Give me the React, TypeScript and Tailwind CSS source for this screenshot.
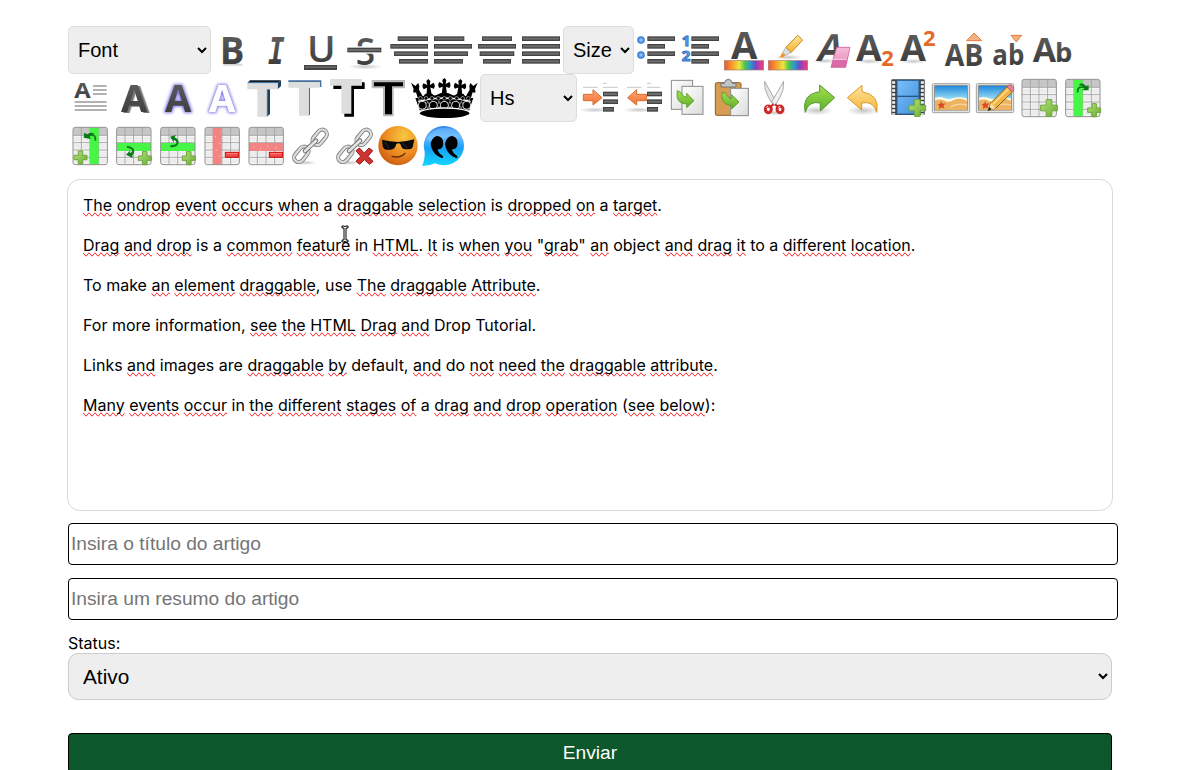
import React from "react";

type GlyphProps = { x: number; row: 1 | 2 | 3; label: string; children: React.ReactNode };

const ROW_TOP = { 1: 18, 2: 162, 3: 306 };

/* Toolbar buttons are drawn three units to the pixel. */
function Tool({ x, row, label, children }: GlyphProps) {
  return (
    <button aria-label={label} className="block h-12 w-11 shrink-0">
      <svg viewBox={`${x} ${ROW_TOP[row]} 132 144`} className="block h-12 w-11 overflow-visible">
        {children}
      </svg>
    </button>
  );
}

type LetterProps = {
  x: number;
  y: number;
  w: number;
  size: number;
  children: string;
  fill?: string;
  className?: string;
  filter?: string;
};

function Letter({ x, y, w, size, children, fill = "url(#ink)", className = "font-bold", filter }: LetterProps) {
  return (
    <text
      x={x}
      y={y}
      fontSize={size}
      textLength={w}
      lengthAdjust="spacingAndGlyphs"
      fill={fill}
      filter={filter}
      className={`font-['Open_Sans',sans-serif] ${className}`}
    >
      {children}
    </text>
  );
}

function Bars({ rows }: { rows: [number, number, number][] }) {
  return (
    <>
      {rows.map(([x1, x2, y], i) => (
        <g key={i}>
          <rect x={x1} y={y} width={x2 - x1} height={14} fill="#444444" />
          <rect x={x1 + 3} y={y + 4} width={x2 - x1 - 6} height={6} fill="#6d6d6d" />
        </g>
      ))}
    </>
  );
}

function Shade({ cx, cy, rx = 45, ry = 8 }: { cx: number; cy: number; rx?: number; ry?: number }) {
  return <ellipse cx={cx} cy={cy} rx={rx} ry={ry} fill="url(#shade)" />;
}

function Plus({ x, y, s = 50 }: { x: number; y: number; s?: number }) {
  const a = s * 0.33;
  const b = s * 0.34;
  return (
    <path
      d={`M${x + a} ${y}h${b}v${a}h${a}v${b}h${-a}v${a}h${-b}v${-a}h${-a}v${-b}h${a}z`}
      fill="url(#plus)"
      stroke="#6fa53f"
      strokeWidth={3}
      strokeLinejoin="round"
    />
  );
}

function Minus({ x, y }: { x: number; y: number }) {
  return (
    <g>
      <rect x={x} y={y} width={40} height={15} fill="#f04747" stroke="#d00d0d" strokeWidth={3} />
      <path d={`M${x + 3} ${y + 4}h34`} stroke="#fb8585" strokeWidth={3} />
    </g>
  );
}

type TableProps = { x: number; y: number; col?: number; band?: boolean; color?: string };

function Table({ x, y, col, band, color = "#46f546" }: TableProps) {
  return (
    <g>
      <rect x={x + 1} y={y + 1} width={103} height={112} rx={7} fill="#fbfbfb" />
      <path d={`M${x + 2} ${y + 24}v-16q0-6 6-6h89q6 0 6 6v16z`} fill="#c6c6c6" />
      {[29, 51, 73, 95].map((t) =>
        [4, 29, 55, 81].map((l) => (
          <rect key={`${t}-${l}`} x={x + l} y={y + t} width={20} height={14} fill="#ececec" />
        )),
      )}
      <path
        d={`M${x + 26} ${y + 2}v110M${x + 52} ${y + 2}v110M${x + 78} ${y + 2}v110M${x + 2} ${y + 25}h101M${x + 2} ${y + 47}h101M${x + 2} ${y + 69}h101M${x + 2} ${y + 91}h101`}
        stroke="#a6a6a6"
        strokeWidth={3}
      />
      {col !== undefined && <rect x={col} y={y + 2} width={27} height={111} fill={color} />}
      {band && <rect x={x + 1} y={y + 48} width={103} height={24} fill={color} />}
      <rect x={x + 1} y={y + 1} width={103} height={112} rx={7} fill="none" stroke="#8f8f8f" strokeWidth={3} />
    </g>
  );
}

function Rainbow({ x }: { x: number }) {
  return <rect x={x} y={122} width={118} height={28} fill="url(#rainbow)" stroke="#a77a70" strokeWidth={2} />;
}

function GreenArrow({ x, y }: { x: number; y: number }) {
  return (
    <path
      transform={`translate(${x} ${y})`}
      d="M1 0Q11 2 15 10Q19 19 29 20V8L51 30L29 51V40Q5 39 1 21Q-1 9 1 0Z"
      fill="url(#leaf)"
      stroke="#4f9a21"
      strokeWidth={2.5}
      strokeLinejoin="round"
    />
  );
}

function Beach({ x }: { x: number }) {
  return (
    <g>
      <rect x={x + 1} y={191} width={112} height={87} rx={3} fill="#e2e2df" stroke="#a2a29f" strokeWidth={3} />
      <rect x={x + 8} y={197} width={98} height={74} fill="url(#sky)" stroke="#777" strokeWidth={2} />
      <path d={`M${x + 9} 234q13-6 28 0t27 0q20-5 41 2v35H${x + 9}z`} fill="#fff9df" />
      <path d={`M${x + 9} 241q15-6 29 1t28-3q20-6 39 3v28H${x + 9}z`} fill="#ecb363" />
      <path d={`M${x + 55} 262q20-15 50-7`} stroke="#f8d79b" strokeWidth={4} fill="none" />
      <path d={`M${x + 27} 242l4 9 10-1-7 8 4 8-9-4-8 6 1-10-5-6 8-1z`} fill="#d94b22" />
    </g>
  );
}

function Chain({ x }: { x: number }) {
  return (
    <g transform={`translate(${x} 0)`}>
      <ellipse cx="38" cy="428" rx="34" ry="7" fill="url(#shade)" />
      <g fill="none" strokeLinecap="round">
        <g stroke="#7c7c7c" strokeWidth="12">
          <rect x="-14" y="-26" width="28" height="52" rx="14" transform="translate(26 403) rotate(40)" />
          <rect x="-14" y="-26" width="28" height="52" rx="14" transform="translate(81 352) rotate(40)" />
        </g>
        <g stroke="#dddddd" strokeWidth="7">
          <rect x="-14" y="-26" width="28" height="52" rx="14" transform="translate(26 403) rotate(40)" />
          <rect x="-14" y="-26" width="28" height="52" rx="14" transform="translate(81 352) rotate(40)" />
        </g>
        <path d="M37 393L70 362" stroke="#6f6f6f" strokeWidth="14" />
        <path d="M37 393L70 362" stroke="#e4e4e4" strokeWidth="8" />
      </g>
    </g>
  );
}

function Cross({ x, y, r = 0, s = 1 }: { x: number; y: number; r?: number; s?: number }) {
  return (
    <path
      transform={`translate(${x} ${y}) rotate(${r}) scale(${s})`}
      d="M-6-18L0-24L6-18L4-6L15-12Q22-3 15 6L5 2L8 25H-8L-5 2L-15 6Q-22-3-15-12L-4-6Z"
    />
  );
}

function Defs() {
  return (
    <svg className="absolute size-0" aria-hidden="true">
      <defs>
        <linearGradient id="ink" x1="0" y1="0" x2="0" y2="1">
          <stop offset="0" stopColor="#686868" />
          <stop offset="1" stopColor="#333333" />
        </linearGradient>
        <radialGradient id="shade">
          <stop offset="0" stopColor="#000" stopOpacity="0.22" />
          <stop offset="1" stopColor="#000" stopOpacity="0" />
        </radialGradient>
        <linearGradient id="plus" x1="0" y1="0" x2="1" y2="1">
          <stop offset="0" stopColor="#b4e37a" />
          <stop offset="1" stopColor="#66ac30" />
        </linearGradient>
        <linearGradient id="leaf" x1="0" y1="0" x2="0" y2="1">
          <stop offset="0" stopColor="#a4e052" />
          <stop offset="1" stopColor="#5cae26" />
        </linearGradient>
        <linearGradient id="gold" x1="0" y1="0" x2="0" y2="1">
          <stop offset="0" stopColor="#ffe49a" />
          <stop offset="1" stopColor="#f5b437" />
        </linearGradient>
        <linearGradient id="orange" x1="0" y1="0" x2="0" y2="1">
          <stop offset="0" stopColor="#ffa879" />
          <stop offset="1" stopColor="#f2702d" />
        </linearGradient>
        <linearGradient id="rainbow">
          <stop offset="0" stopColor="#e95632" />
          <stop offset="0.22" stopColor="#f7a52e" />
          <stop offset="0.38" stopColor="#e8e83b" />
          <stop offset="0.52" stopColor="#4fc64c" />
          <stop offset="0.68" stopColor="#2792d9" />
          <stop offset="0.8" stopColor="#7646bd" />
          <stop offset="0.91" stopColor="#d23baa" />
          <stop offset="1" stopColor="#e83f59" />
        </linearGradient>
        <linearGradient id="sky" x1="0" y1="0" x2="0" y2="1">
          <stop offset="0" stopColor="#2087da" />
          <stop offset="0.5" stopColor="#8ed7f4" />
        </linearGradient>
        <linearGradient id="film" x1="0" y1="0" x2="1" y2="1">
          <stop offset="0" stopColor="#7ac0f9" />
          <stop offset="1" stopColor="#438fda" />
        </linearGradient>
        <linearGradient id="paper" x1="0" y1="0" x2="1" y2="1">
          <stop offset="0" stopColor="#ffffff" />
          <stop offset="1" stopColor="#dadcdb" />
        </linearGradient>
        <linearGradient id="pink" x1="0" y1="0" x2="0" y2="1">
          <stop offset="0" stopColor="#f5bbd9" />
          <stop offset="0.6" stopColor="#ed9bc6" />
          <stop offset="0.63" stopColor="#dc6aa8" />
        </linearGradient>
        <radialGradient id="face" cx="0.65" cy="0.25" r="0.8">
          <stop offset="0" stopColor="#f8c840" />
          <stop offset="0.6" stopColor="#ec8a21" />
          <stop offset="1" stopColor="#c95c12" />
        </radialGradient>
        <linearGradient id="bubble" x1="0" y1="0" x2="0" y2="1">
          <stop offset="0" stopColor="#2f87ed" />
          <stop offset="0.3" stopColor="#63b8ff" />
          <stop offset="0.55" stopColor="#1a9ff5" />
          <stop offset="1" stopColor="#12d7ff" />
        </linearGradient>
        <filter id="halo" x="-40%" y="-20%" width="180%" height="140%">
          <feMorphology in="SourceAlpha" operator="dilate" radius="4" result="wide" />
          <feGaussianBlur in="wide" stdDeviation="4" result="soft" />
          <feFlood floodColor="#6a68e0" floodOpacity="0.85" />
          <feComposite in2="soft" operator="in" result="glow" />
          <feMerge>
            <feMergeNode in="glow" />
            <feMergeNode in="SourceGraphic" />
          </feMerge>
        </filter>
        <filter id="cast" x="-20%" y="-10%" width="150%" height="130%">
          <feDropShadow dx="7" dy="3" stdDeviation="0.6" floodColor="#777777" />
        </filter>
      </defs>
    </svg>
  );
}

const SELECT =
  "h-12 shrink-0 rounded-[5px] border border-[#dddddd] bg-[#eeeeee] px-[5px] font-['Liberation_Sans',Arial,sans-serif] text-[20px] text-black";

function RowOne() {
  return (
    <div className="flex h-12">
      <select aria-label="Font" className={`${SELECT} w-[143px]`}>
        <option>Font</option>
      </select>
      <Tool x={453} row={1} label="Bold">
        <path d="M490 131h57v6h-57z" fill="#d4d4d4" />
        <Letter x={479} y={131} w={74} size={113}>B</Letter>
      </Tool>
      <Tool x={585} row={1} label="Italic">
        <text x="624" y="131" fontSize="112" textLength="50" lengthAdjust="spacingAndGlyphs" fill="url(#ink)" className="font-['DejaVu_Sans_Mono',monospace] font-bold italic">I</text>
      </Tool>
      <Tool x={-33} row={1} label="Underline">
        <Letter x={-9} y={125} w={86} size={108} className="font-semibold">U</Letter>
        <rect x="-18" y="135" width="99" height="15" fill="#444" />
        <rect x="-15" y="139" width="93" height="5" fill="#686868" />
      </Tool>
      <Tool x={99} row={1} label="Strikethrough">
        <Shade cx={166} cy={140} rx={52} />
        <Letter x={137} y={134} w={58} size={115} className="font-semibold">S</Letter>
        <rect x="108" y="79" width="108" height="22" fill="#fff" />
        <Bars rows={[[112, 214, 83]]} />
      </Tool>
      <Tool x={231} row={1} label="Align right">
        <Bars rows={[[263, 354, 49], [241, 354, 72], [252, 354, 94], [267, 354, 117]]} />
      </Tool>
      <Tool x={363} row={1} label="Align left">
        <Bars rows={[[372, 463, 49], [372, 486, 72], [372, 474, 94], [372, 459, 117]]} />
      </Tool>
      <Tool x={495} row={1} label="Align center">
        <Bars rows={[[516, 606, 49], [504, 618, 72], [509, 613, 94], [519, 603, 117]]} />
      </Tool>
      <Tool x={627} row={1} label="Justify">
        <Bars rows={[[636, 750, 49], [636, 750, 72], [636, 750, 94], [636, 750, 117]]} />
      </Tool>
      <select aria-label="Size" className={`${SELECT} w-[71px]`}>
        <option>Size</option>
      </select>
      <Tool x={222} row={1} label="Bulleted list">
        {[60, 105].map((cy) => (
          <g key={cy}>
            <circle cx="243" cy={cy} r="9.5" fill="#5ea2ef" stroke="#3d7fd0" strokeWidth="4" />
            <circle cx="243" cy={cy} r="4" fill="#8fc0fb" />
          </g>
        ))}
        <Bars rows={[[262, 345, 49], [262, 315, 72], [262, 345, 94], [262, 315, 117]]} />
      </Tool>
      <Tool x={354} row={1} label="Numbered list">
        <text fontSize="45" fill="#6caaf0" stroke="#336fbd" strokeWidth="3" className="font-['Open_Sans',sans-serif] font-bold">
          <tspan x="365" y="77">1</tspan>
          <tspan x="365" y="122">2</tspan>
        </text>
        <Bars rows={[[394, 477, 49], [394, 447, 72], [394, 477, 94], [394, 447, 117]]} />
      </Tool>
      <Tool x={486} row={1} label="Text colour">
        <Letter x={513} y={116} w={79} size={110}>A</Letter>
        <Rainbow x={493} />
      </Tool>
      <Tool x={618} row={1} label="Highlight colour">
        <Shade cx={685} cy={112} rx={42} />
        <path d="M658 113L667 98L677 105L671 112Z" fill="#f09a2c" />
        <path d="M667 98L678 82L694 97L677 106Z" fill="#ddd" stroke="#999" strokeWidth="2" />
        <path d="M678 82L713 46L728 60L694 97Z" fill="url(#gold)" stroke="#c88b1c" strokeWidth="3" strokeLinejoin="round" />
        <Rainbow x={625} />
      </Tool>
      <Tool x={0} row={1} label="Remove format">
        <Shade cx={45} cy={123} rx={38} />
        <g transform="translate(17 122) skewX(-14)">
          <Letter x={0} y={0} w={72} size={112}>A</Letter>
        </g>
        <path d="M80 82H120L107 142H63L70 116Z" fill="url(#pink)" stroke="#cf609e" strokeWidth="2.5" strokeLinejoin="round" />
        <path d="M70 118H110" stroke="#fbd2e7" strokeWidth="3" />
      </Tool>
      <Tool x={132} row={1} label="Subscript">
        <Shade cx={178} cy={124} rx={40} />
        <Letter x={138} y={122} w={77} size={108}>A</Letter>
        <Letter x={214} y={137} w={38} size={64} fill="#e66a27">2</Letter>
      </Tool>
      <Tool x={264} row={1} label="Superscript">
        <Shade cx={310} cy={124} rx={40} />
        <Letter x={271} y={122} w={77} size={108}>A</Letter>
        <Letter x={339} y={78} w={38} size={64} fill="#e66a27">2</Letter>
      </Tool>
      <Tool x={396} row={1} label="Upper case">
        <Letter x={404} y={139} w={116} size={89}>AB</Letter>
        <path d="M470 62L492 39L515 62Z" fill="#f6b181" stroke="#e8793f" strokeWidth="3" />
      </Tool>
      <Tool x={528} row={1} label="Lower case">
        <Letter x={547} y={134} w={96} size={86}>ab</Letter>
        <path d="M603 46H635L619 66Z" fill="#f6b181" stroke="#e8793f" strokeWidth="3" />
      </Tool>
      <Tool x={660} row={1} label="Capitalize">
        <Letter x={668} y={126} w={70} size={100}>A</Letter>
        <Letter x={735} y={125} w={52} size={81}>b</Letter>
      </Tool>
    </div>
  );
}

function RowTwo() {
  return (
    <div className="flex h-12">
      <Tool x={24} row={2} label="Line height">
        <Letter x={43} y={234} w={49} size={65}>A</Letter>
        <path d="M99 198h41M99 210h41M99 222h41M44 246h96M44 258h96M44 270h96" stroke="#66676b" strokeWidth="3.5" />
      </Tool>
      <Tool x={156} row={2} label="Text shadow">
        <Letter x={183} y={276} w={79} size={111} filter="url(#cast)">A</Letter>
      </Tool>
      <Tool x={288} row={2} label="Text glow">
        <Letter x={315} y={276} w={79} size={111} filter="url(#halo)">A</Letter>
      </Tool>
      <Tool x={420} row={2} label="Text outline">
        <Letter x={447} y={276} w={79} size={111} fill="#fff" filter="url(#halo)">A</Letter>
      </Tool>
      <button aria-label="Deep text" className="w-[42px] shrink-0">
        <svg viewBox="552 162 126 144" className="block h-12 w-[42px]">
          <path d="M562 190L570 181H663L653 190Z" fill="#111c27" />
          <path d="M653 190L663 181V198L653 208ZM620 208H630V282L620 290Z" fill="#18405f" />
          <path d="M562 190L566 186H658L653 190ZM620 208H624V287L620 290Z" fill="#3b74a7" />
          <path d="M562 190H653V208H620V290H592V208H562Z" fill="#dddddd" />
        </svg>
      </button>
      <button aria-label="Raised text" className="w-[42px] shrink-0">
        <svg viewBox="678 162 126 144" className="block h-12 w-[42px]">
          <path d="M685 186V181H784V201H779V186ZM746 203H750V284L746 287Z" fill="#426f9e" />
          <path d="M685 186H779V203H746V287H717V203H685Z" fill="#dddddd" />
        </svg>
      </button>
      <button aria-label="Hard shadow text" className="w-[42px] shrink-0">
        <svg viewBox="54 162 126 144" className="block h-12 w-[42px]">
          <path d="M70 187H164V207H132V290H103V207H70Z" fill="#000" />
          <path d="M60 177H156V197H124V281H94V197H60Z" fill="#dddddd" />
        </svg>
      </button>
      <button aria-label="Outlined text" className="w-10 shrink-0">
        <svg viewBox="180 162 120 144" className="block h-12 w-10">
          <path d="M185 180H285V205H251V289H219V205H185Z" fill="#b9b9b9" />
          <path d="M192 187H279V199H246V283H225V199H192Z" fill="#000" />
        </svg>
      </button>
      <button aria-label="Special style" className="w-[70px] shrink-0">
        <svg viewBox="300 162 210 144" className="block h-12 w-[70px]">
          <Cross x={403} y={198} />
          <Cross x={356} y={201} r={-3} />
          <Cross x={450} y={201} r={3} />
          <path d="M303 188L316 198L325 189Q331 200 327 209L340 232L325 239L318 217Q306 222 311 207Z" />
          <path d="M503 188L490 198L481 189Q475 200 479 209L466 232L481 239L488 217Q500 222 495 207Z" />
          <path d="M316 234Q337 236 346 221H366Q372 229 379 225L393 219H414L427 225Q434 229 441 221H460Q469 236 490 234L486 245L478 271H329L320 245Z" />
          <path d="M324 244Q404 224 482 244" fill="none" stroke="#fff" strokeWidth="4" />
          {[337, 370, 403, 437, 470].map((cx) => (
            <g key={cx}>
              <circle cx={cx} cy={256} r="13" fill="#fff" />
              <circle cx={cx} cy={256} r="10.5" />
            </g>
          ))}
          {[331, 348, 366, 385, 403, 421, 440, 458, 475].map((cx) => (
            <circle key={cx} cx={cx} cy={235} r="5.5" stroke="#fff" strokeWidth="1.5" />
          ))}
          {[353, 387, 420, 454].map((cx) => (
            <path key={cx} d={`M${cx} 244l5 11-5 11-5-11z`} stroke="#fff" strokeWidth="1.5" />
          ))}
          <ellipse cx="404" cy="279" rx="76" ry="17" fill="#fff" />
          <ellipse cx="404" cy="280" rx="74" ry="14" />
        </svg>
      </button>
      <select aria-label="Heading" className={`${SELECT} w-[97px]`}>
        <option>Hs</option>
      </select>
      <Tool x={51} row={2} label="Indent">
        <Shade cx={105} cy={270} rx={48} />
        <path d="M69 202h44M129 202h44M129 190h11" stroke="#aaa" strokeWidth="2" />
        <path d="M70 223H99V209L126 233L99 255V242H70Z" fill="url(#orange)" stroke="#d96a2d" strokeWidth="3" strokeLinejoin="round" />
        <Bars rows={[[129, 174, 215], [129, 174, 238], [129, 162, 261]]} />
      </Tool>
      <Tool x={183} row={2} label="Outdent">
        <Shade cx={237} cy={270} rx={48} />
        <path d="M201 202h44M261 202h40M261 190h11" stroke="#aaa" strokeWidth="2" />
        <path d="M259 223H230V209L203 233L230 255V242H259Z" fill="url(#orange)" stroke="#d96a2d" strokeWidth="3" strokeLinejoin="round" />
        <Bars rows={[[261, 306, 215], [261, 306, 238], [261, 294, 261]]} />
      </Tool>
      <Tool x={315} row={2} label="Copy">
        <rect x="334" y="181" width="64" height="87" fill="url(#paper)" stroke="#8a8d8b" strokeWidth="3" />
        <rect x="366" y="199" width="63" height="84" fill="url(#paper)" stroke="#8a8d8b" strokeWidth="3" />
        <GreenArrow x={351} y={212} />
      </Tool>
      <Tool x={447} row={2} label="Paste">
        <rect x="466" y="188" width="77" height="98" rx="4" fill="#d59c54" stroke="#8f5e20" strokeWidth="3" />
        <rect x="512" y="205" width="53" height="82" fill="url(#paper)" stroke="#8a8d8b" strokeWidth="3" />
        <path d="M483 201V190H493Q495 178 505 178T517 190H528V201Z" fill="#c2c5c8" stroke="#70767a" strokeWidth="3" />
        <GreenArrow x={486} y={216} />
      </Tool>
      <Tool x={579} row={2} label="Cut">
        <Shade cx={643} cy={278} rx={40} />
        <path d="M614 184Q612 210 625 231L640 256L649 246Z" fill="#e5e7e7" stroke="#9b9e9e" strokeWidth="2.5" strokeLinejoin="round" />
        <path d="M671 184Q673 210 660 231L646 256L635 246Z" fill="#f0f1f1" stroke="#9b9e9e" strokeWidth="2.5" strokeLinejoin="round" />
        <g fill="none" stroke="#cf2828" strokeWidth="9">
          <ellipse cx="625" cy="268" rx="9" ry="10" />
          <ellipse cx="660" cy="268" rx="9" ry="10" />
          <path d="M632 259L641 253M653 259L645 253" strokeWidth="6" />
        </g>
        <path d="M619 262l5-3M655 262l5-3" stroke="#fff0ee" strokeWidth="3" />
      </Tool>
      <Tool x={711} row={2} label="Redo">
        <Shade cx={770} cy={272} rx={50} ry={14} />
        <path d="M736 277Q724 224 779 215V195L824 233L781 273V249Q745 241 736 277Z" fill="url(#leaf)" stroke="#4e982a" strokeWidth="3" strokeLinejoin="round" />
      </Tool>
      <Tool x={93} row={2} label="Undo">
        <Shade cx={160} cy={272} rx={50} ry={14} />
        <path d="M200 277Q211 224 156 215V196L112 233L155 270V249Q190 241 200 277Z" fill="url(#gold)" stroke="#d99a28" strokeWidth="3" strokeLinejoin="round" />
      </Tool>
      <Tool x={225} row={2} label="Insert video">
        <rect x="244" y="178" width="100" height="107" rx="3" fill="#3d454b" />
        <path d="M251 184V284M337 184V284" stroke="#f4f4f4" strokeWidth="9" strokeDasharray="7 5" />
        <rect x="261" y="181" width="66" height="101" fill="url(#film)" stroke="#2e5f91" strokeWidth="3" />
        <path d="M261 229h66" stroke="#285681" strokeWidth="4" />
        <Plus x={297} y={239} />
      </Tool>
      <Tool x={357} row={2} label="Insert image">
        <Beach x={366} />
      </Tool>
      <Tool x={489} row={2} label="Edit image">
        <Beach x={498} />
        <path d="M534 272L543 248L591 200L607 216L557 265Z" fill="#f2b443" stroke="#895e1d" strokeWidth="3" strokeLinejoin="round" />
        <path d="M549 253L596 206" stroke="#ffe29b" strokeWidth="4" />
        <path d="M591 200L596 195Q603 192 609 200Q612 206 611 211L607 216Z" fill="#ec8191" stroke="#a14d5a" strokeWidth="2" />
        <path d="M534 272L543 248L557 265Z" fill="#f8dba6" />
        <path d="M533 273L538 261L545 268Z" fill="#1a1a1a" />
      </Tool>
      <Tool x={621} row={2} label="Insert table">
        <Table x={635} y={177} />
        <Plus x={692} y={239} />
      </Tool>
      <Tool x={753} row={2} label="Add column right">
        <Table x={766} y={177} col={791} />
        <path d="M803 217Q801 195 826 203" fill="none" stroke="#087a17" strokeWidth="5" />
        <path d="M812 190Q822 191 828 198L836 196L836 211L816 211L823 204Q819 196 806 196Z" fill="#087a17" />
        <Plus x={833} y={251} s={39} />
      </Tool>
    </div>
  );
}

function RowThree() {
  return (
    <div className="flex h-12">
      <Tool x={24} row={3} label="Add column left">
        <Table x={38} y={321} col={89} />
        <path d="M106 362Q108 338 84 347" fill="none" stroke="#087a17" strokeWidth="5" />
        <path d="M71 353L73 338L81 343Q92 334 103 341L89 347L92 357Z" fill="#087a17" />
        <Plus x={42} y={393} s={39} />
      </Tool>
      <Tool x={156} row={3} label="Add row below">
        <Table x={169} y={321} band />
        <path d="M201 380Q225 384 218 399Q215 405 208 405" fill="none" stroke="#087a17" strokeWidth="6" />
        <path d="M198 404L211 391L210 400Q220 394 218 384Q226 396 217 405L218 414Z" fill="#087a17" />
        <Plus x={235} y={395} s={39} />
      </Tool>
      <Tool x={288} row={3} label="Add row above">
        <Table x={301} y={321} band />
        <path d="M331 379Q353 379 353 367Q353 359 342 356" fill="none" stroke="#087a17" strokeWidth="6" />
        <path d="M330 350L348 345L344 352Q357 358 353 373Q349 360 341 360L342 368Z" fill="#087a17" />
        <Plus x={367} y={395} s={39} />
      </Tool>
      <Tool x={420} row={3} label="Delete column">
        <Table x={434} y={321} col={458} color="#f28484" />
        <path d="M465 350h3M478 370h3M467 390h3M477 408h3" stroke="#ffd5d5" strokeWidth="3" />
        <Minus x={496} y={397} />
      </Tool>
      <Tool x={552} row={3} label="Delete row">
        <Table x={566} y={321} band color="#f28484" />
        <path d="M580 381h3M600 387h3M622 378h3M646 384h3" stroke="#ffd5d5" strokeWidth="3" />
        <Minus x={628} y={397} />
      </Tool>
      <Tool x={-66} row={3} label="Link">
        <Chain x={-52} />
      </Tool>
      <Tool x={66} row={3} label="Unlink">
        <Chain x={80} />
        <path d="M138 392L148 384L163 399L177 384L188 392L174 409L189 424L179 433L163 419L149 433L138 424L152 409Z" fill="#cf3434" stroke="#9f1818" strokeWidth="3" strokeLinejoin="round" />
      </Tool>
      <Tool x={198} row={3} label="Emoji">
        <circle cx="264" cy="377" r="59" fill="url(#face)" />
        <path d="M216 359Q238 365 264 366Q292 364 313 358L309 378Q307 388 297 388H286Q275 388 271 372Q265 367 259 372Q255 389 242 389H231Q220 389 218 378Z" fill="#090909" />
        <path d="M225 366L237 385M278 368L292 384" stroke="#333" strokeWidth="3" />
        <path d="M246 409Q270 416 285 400" fill="none" stroke="#5e2604" strokeWidth="4" strokeLinecap="round" />
      </Tool>
      <Tool x={330} row={3} label="Quote">
        <path d="M336 437Q345 420 344 395A60.500 59 0 1 1 375 430Q360 438 336 437Z" fill="url(#bubble)" />
        <path d="M355 348Q376 318 420 325Q446 331 457 353Q410 343 355 365Z" fill="#9edaff" opacity="0.35" />
        <path
          d="M394 353Q382 343 371 353Q358 366 365 385Q372 406 395 414Q402 415 398 407Q384 399 383 388Q398 389 400 371Q401 359 394 353ZM437 353Q425 343 414 353Q401 366 408 385Q415 406 438 414Q445 415 441 407Q427 399 426 388Q441 389 443 371Q444 359 437 353Z"
          fill="#000"
        />
      </Tool>
    </div>
  );
}

/* Words wrapped in square brackets are flagged by the spell checker. */
const PARAGRAPHS = [
  "[The] [ondrop] [event] [occurs] [when] a [draggable] [selection] is [dropped] [on] a [target].",
  "[Drag] [and] [drop] is a [common] [feature] in [HTML]. [It] is [when] [you] \"[grab]\" [an] object [and] [drag] [it] to a [different] [location].",
  "To make [an] [element] [draggable], use [The] [draggable] [Attribute].",
  "For more information, [see] [the] [HTML] [Drag] [and] Drop Tutorial.",
  "Links [and] images are [draggable] [by] default, [and] do [not] [need] [the] [draggable] [attribute].",
  "[Many] [events] [occur] in [the] [different] [stages] [of] a [drag] [and] [drop] [operation] ([see] [below]):",
];

function Paragraph({ text }: { text: string }) {
  return (
    <p className="h-10 leading-6">
      {text.split(/(\[[^\]]+\])/).map((part, i) =>
        part.startsWith("[") ? (
          <span key={i} className="[text-decoration-line:spelling-error]">
            {part.slice(1, -1)}
          </span>
        ) : (
          part
        ),
      )}
    </p>
  );
}

const INPUT =
  "block h-[42px] w-[1050px] rounded-[4px] border border-black bg-white px-[2px] font-['Liberation_Sans',Arial,sans-serif] text-[19.2px] text-black placeholder:text-[#757575]";

export default function App() {
  return (
    <main className="h-[770px] w-full overflow-hidden bg-white pt-[26px] pl-[68px] font-['Inter',sans-serif] text-base text-black">
      <Defs />
      <div>
        <RowOne />
        <RowTwo />
        <RowThree />
      </div>
      <section className="relative mt-[9px] -ml-px h-[332px] w-[1046px] rounded-[13px] border border-[#d8d8d8] px-[15px] pt-[13px]">
        {PARAGRAPHS.map((text) => (
          <Paragraph key={text} text={text} />
        ))}
        <svg viewBox="0 0 24 54" className="absolute top-[45px] left-[273px] h-[18px] w-2">
          <path d="M3 3H10L12 6L14 3H21V9H15V45H21V51H14L12 48L10 51H3V45H9V9H3Z" fill="#fff" stroke="#000" strokeWidth="3" />
        </svg>
      </section>
      <input aria-label="Título" placeholder="Insira o título do artigo" className={`${INPUT} mt-3`} />
      <input aria-label="Resumo" placeholder="Insira um resumo do artigo" className={`${INPUT} mt-[13px]`} />
      <label className="mt-[13px] block h-5 leading-5">Status:</label>
      <select
        aria-label="Status"
        className="block h-[47px] w-[1044px] rounded-[10px] border border-[#cccccc] bg-[#eeeeee] px-[10px] font-['Liberation_Sans',Arial,sans-serif] text-[20.8px] text-black"
      >
        <option>Ativo</option>
      </select>
      <button className="mt-[33px] block h-10 w-[1044px] rounded-[4px] border border-black bg-[#0d572c] font-['Liberation_Sans',Arial,sans-serif] text-[19.2px] text-white">
        Enviar
      </button>
    </main>
  );
}
